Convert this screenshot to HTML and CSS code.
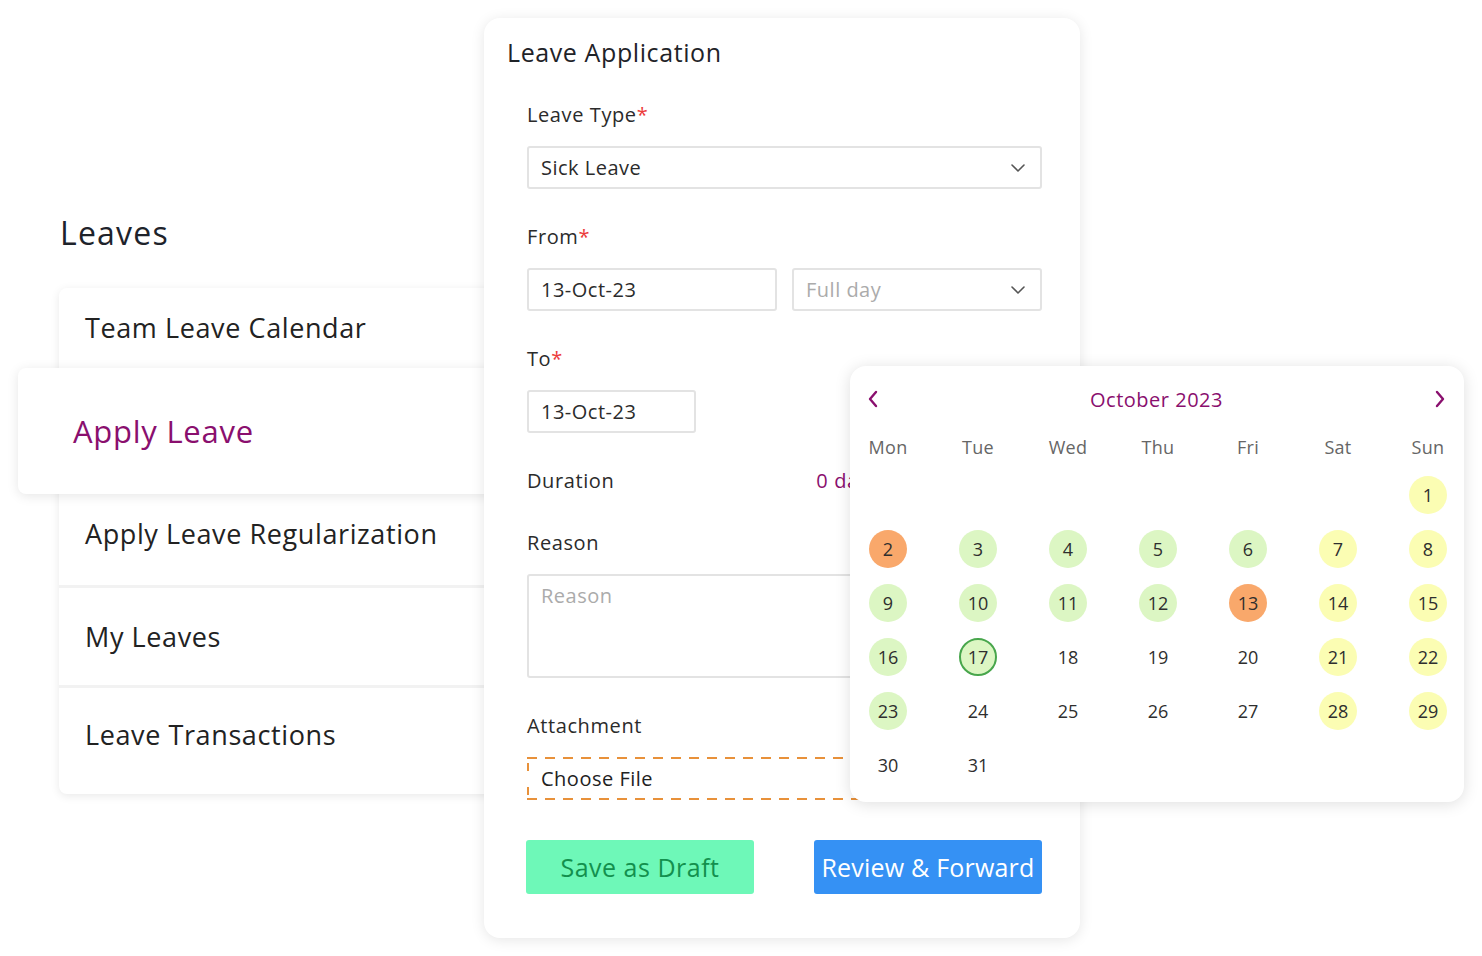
FILE: index.html
```html
<!DOCTYPE html>
<html lang="en">
<head>
  <meta charset="UTF-8" />
  <title>Leaves - Apply Leave</title>
  <meta name="viewport" content="width=device-width, initial-scale=1.0"/>
  <link rel="stylesheet" href="styles.css">
</head>
<body>
  <div class="scene">

    <!-- Leaves side menu -->
    <div class="leaves">
      <h2 class="leaves-title">Leaves</h2>
      <ul class="menu">
        <li class="menu-item item-team">Team Leave Calendar</li>
        <li class="menu-item active">Apply Leave</li>
        <li class="menu-item item-reg">Apply Leave Regularization</li>
        <li class="menu-item item-mine">My Leaves</li>
        <li class="menu-item item-trans">Leave Transactions</li>
      </ul>
    </div>

    <!-- Leave application form -->
    <div class="form-card">
      <h3 class="form-title">Leave Application</h3>
      <div class="fields">
        <div class="field">
          <label>Leave Type<span class="req">*</span></label>
          <div class="input select">
            <span>Sick Leave</span>
            <svg class="chev" width="16" height="10" viewBox="0 0 16 10"><path d="M2 2l6 6 6-6" fill="none" stroke="#555" stroke-width="1.6" stroke-linecap="round" stroke-linejoin="round"/></svg>
          </div>
        </div>

        <div class="field">
          <label>From<span class="req">*</span></label>
          <div class="row">
            <div class="input half">13-Oct-23</div>
            <div class="input half select placeholder">
              <span>Full day</span>
              <svg class="chev" width="16" height="10" viewBox="0 0 16 10"><path d="M2 2l6 6 6-6" fill="none" stroke="#555" stroke-width="1.6" stroke-linecap="round" stroke-linejoin="round"/></svg>
            </div>
          </div>
        </div>

        <div class="field">
          <label>To<span class="req">*</span></label>
          <div class="input short">13-Oct-23</div>
        </div>

        <div class="duration">
          <span>Duration</span>
          <span class="duration-value">0 days</span>
        </div>

        <div class="field">
          <label>Reason</label>
          <div class="input textarea placeholder">Reason</div>
        </div>

        <div class="field">
          <label>Attachment</label>
          <div class="input file">Choose File</div>
        </div>
      </div>

      <div class="actions">
        <button class="btn btn-draft">Save as Draft</button>
        <button class="btn btn-forward">Review &amp; Forward</button>
      </div>
    </div>

    <!-- Date picker popup -->
    <div class="calendar">
      <div class="cal-head">
        <svg width="14" height="22" viewBox="0 0 14 22"><path d="M10 4L4 11l6 7" fill="none" stroke="#8a0f6e" stroke-width="2.4" stroke-linecap="round" stroke-linejoin="round"/></svg>
        <span class="cal-month">October 2023</span>
        <svg width="14" height="22" viewBox="0 0 14 22"><path d="M4 4l6 7-6 7" fill="none" stroke="#8a0f6e" stroke-width="2.4" stroke-linecap="round" stroke-linejoin="round"/></svg>
      </div>
      <div class="cal-grid">
        <div class="wd">Mon</div><div class="wd">Tue</div><div class="wd">Wed</div><div class="wd">Thu</div><div class="wd">Fri</div><div class="wd">Sat</div><div class="wd">Sun</div>

        <div class="day"></div><div class="day"></div><div class="day"></div><div class="day"></div><div class="day"></div><div class="day"></div>
        <div class="day"><span class="yellow">1</span></div>

        <div class="day"><span class="orange">2</span></div>
        <div class="day"><span class="green">3</span></div>
        <div class="day"><span class="green">4</span></div>
        <div class="day"><span class="green">5</span></div>
        <div class="day"><span class="green">6</span></div>
        <div class="day"><span class="yellow">7</span></div>
        <div class="day"><span class="yellow">8</span></div>

        <div class="day"><span class="green">9</span></div>
        <div class="day"><span class="green">10</span></div>
        <div class="day"><span class="green">11</span></div>
        <div class="day"><span class="green">12</span></div>
        <div class="day"><span class="orange">13</span></div>
        <div class="day"><span class="yellow">14</span></div>
        <div class="day"><span class="yellow">15</span></div>

        <div class="day"><span class="green">16</span></div>
        <div class="day"><span class="green today">17</span></div>
        <div class="day"><span>18</span></div>
        <div class="day"><span>19</span></div>
        <div class="day"><span>20</span></div>
        <div class="day"><span class="yellow">21</span></div>
        <div class="day"><span class="yellow">22</span></div>

        <div class="day"><span class="green">23</span></div>
        <div class="day"><span>24</span></div>
        <div class="day"><span>25</span></div>
        <div class="day"><span>26</span></div>
        <div class="day"><span>27</span></div>
        <div class="day"><span class="yellow">28</span></div>
        <div class="day"><span class="yellow">29</span></div>

        <div class="day"><span>30</span></div>
        <div class="day"><span>31</span></div>
      </div>
    </div>

  </div>
</body>
</html>
```

FILE: styles.css
```css
body {
  margin: 0;
  background: #fff;
  font-family: 'Open Sans', sans-serif;
  color: #222;
}

.scene {
  position: relative;
  width: 1482px;
  height: 956px;
  overflow: hidden;
}

/* ---------- side menu ---------- */
.leaves {
  position: absolute;
  left: 59px;
  top: 208px;
  width: 460px;
}

.leaves-title {
  margin: 0 0 0 1px;
  height: 50px;
  line-height: 50px;
  font-size: 32px;
  font-weight: 400;
  color: #1e232b;
  letter-spacing: 1.2px;
}

.menu {
  list-style: none;
  margin: 30px 0 0;
  padding: 0;
  background: #fff;
  border-radius: 8px;
  box-shadow: 0 2px 10px rgba(0, 0, 0, 0.09);
}

.menu-item {
  display: flex;
  align-items: center;
  padding-left: 26px;
  font-size: 27px;
  color: #222;
  letter-spacing: 0.6px;
  box-sizing: border-box;
}

.item-team {
  height: 80px;
  padding-bottom: 2px;
}

.menu-item.active {
  position: relative;
  margin-left: -41px;
  padding-left: 55px;
  height: 126px;
  font-size: 31px;
  color: #8a0f6e;
  background: #fff;
  border-radius: 8px;
  box-shadow: 0 2px 12px rgba(0, 0, 0, 0.1);
  letter-spacing: 0.75px;
}

.item-reg {
  height: 94px;
  padding-bottom: 12px;
  border-bottom: 3px solid #f2f2f2;
}

.item-mine {
  height: 100px;
  border-bottom: 3px solid #f2f2f2;
}

.item-trans {
  height: 106px;
  padding-bottom: 14px;
}

/* ---------- form card ---------- */
.form-card {
  position: absolute;
  left: 484px;
  top: 18px;
  width: 596px;
  height: 920px;
  box-sizing: border-box;
  padding: 19px 38px 0 43px;
  background: #fff;
  border-radius: 16px;
  box-shadow: 0 2px 14px rgba(0, 0, 0, 0.1);
}

.form-title {
  margin: 0 0 33px -20px;
  height: 30px;
  line-height: 30px;
  font-size: 25px;
  font-weight: 400;
  color: #1f2328;
  letter-spacing: 0.6px;
}

.fields {
  display: flex;
  flex-direction: column;
  gap: 33px;
  width: 515px;
}

.field label {
  display: block;
  height: 30px;
  line-height: 30px;
  margin-bottom: 16px;
  font-size: 20px;
  color: #2b2b2b;
  letter-spacing: 0.6px;
}

.req {
  color: #ec3b3b;
}

.input {
  display: flex;
  align-items: center;
  height: 43px;
  box-sizing: border-box;
  padding: 0 12px;
  border: 2px solid #e3e3e3;
  border-radius: 3px;
  font-size: 20px;
  color: #2b2b2b;
  letter-spacing: 0.5px;
}

.select {
  justify-content: space-between;
  padding-right: 14px;
}

.placeholder {
  color: #ababab;
}

.row {
  display: flex;
  gap: 15px;
}

.half {
  width: 250px;
}

.short {
  width: 169px;
}

.duration {
  display: flex;
  height: 29px;
  line-height: 29px;
  font-size: 20px;
  color: #2b2b2b;
  letter-spacing: 0.6px;
}

.duration-value {
  margin-left: 202px;
  color: #8a0f6e;
}

.textarea {
  height: 104px;
  align-items: flex-start;
  padding-top: 6px;
}

/* dashed drop zone, drawn with gradients for longer dashes */
.file {
  border: none;
  border-radius: 0;
  padding-left: 14px;
  color: #222;
  background:
    repeating-linear-gradient(90deg, #e8913a 0 10px, transparent 10px 18px) left top / 100% 2px no-repeat,
    repeating-linear-gradient(90deg, #e8913a 0 10px, transparent 10px 18px) left bottom / 100% 2px no-repeat,
    repeating-linear-gradient(180deg, transparent 0 6px, #e8913a 6px 14px, transparent 14px 24px) left top / 2px 100% no-repeat;
}

.actions {
  display: flex;
  justify-content: space-between;
  width: 516px;
  margin-top: 40px;
  margin-left: -1px;
}

.btn {
  width: 228px;
  height: 54px;
  padding: 0;
  border: none;
  border-radius: 3px;
  font-family: 'Open Sans', sans-serif;
  font-size: 25px;
  cursor: pointer;
}

.btn-draft {
  background: #6ef8b8;
  color: #13904e;
  letter-spacing: 0.5px;
}

.btn-forward {
  background: #3591f4;
  color: #fff;
  letter-spacing: 0.2px;
}

/* ---------- calendar popup ---------- */
.calendar {
  position: absolute;
  left: 850px;
  top: 366px;
  width: 614px;
  height: 436px;
  box-sizing: border-box;
  padding-top: 18px;
  background: #fff;
  border-radius: 16px;
  box-shadow: 0 2px 16px rgba(0, 0, 0, 0.13);
}

.cal-head {
  display: flex;
  align-items: center;
  justify-content: space-between;
  height: 30px;
  padding: 0 17px 0 16px;
}

.cal-month {
  font-size: 20px;
  color: #8a0f6e;
  letter-spacing: 0.5px;
}

.cal-grid {
  display: grid;
  grid-template-columns: repeat(7, 90px);
  grid-template-rows: 36px repeat(6, 54px);
  margin: 18px 0 0 -7px;
}

.wd {
  text-align: center;
  line-height: 30px;
  font-size: 18px;
  color: #666;
  letter-spacing: 0.3px;
}

.day {
  display: flex;
  align-items: center;
  justify-content: center;
}

.day span {
  display: flex;
  align-items: center;
  justify-content: center;
  width: 38px;
  height: 38px;
  border-radius: 50%;
  font-size: 18px;
  color: #2e2e2e;
  box-sizing: border-box;
}

.day .green {
  background: #dcf6c3;
}

.day .yellow {
  background: #fbfdb3;
}

.day .orange {
  background: #f9a86b;
}

.day .today {
  border: 2px solid #48a64c;
}
```
